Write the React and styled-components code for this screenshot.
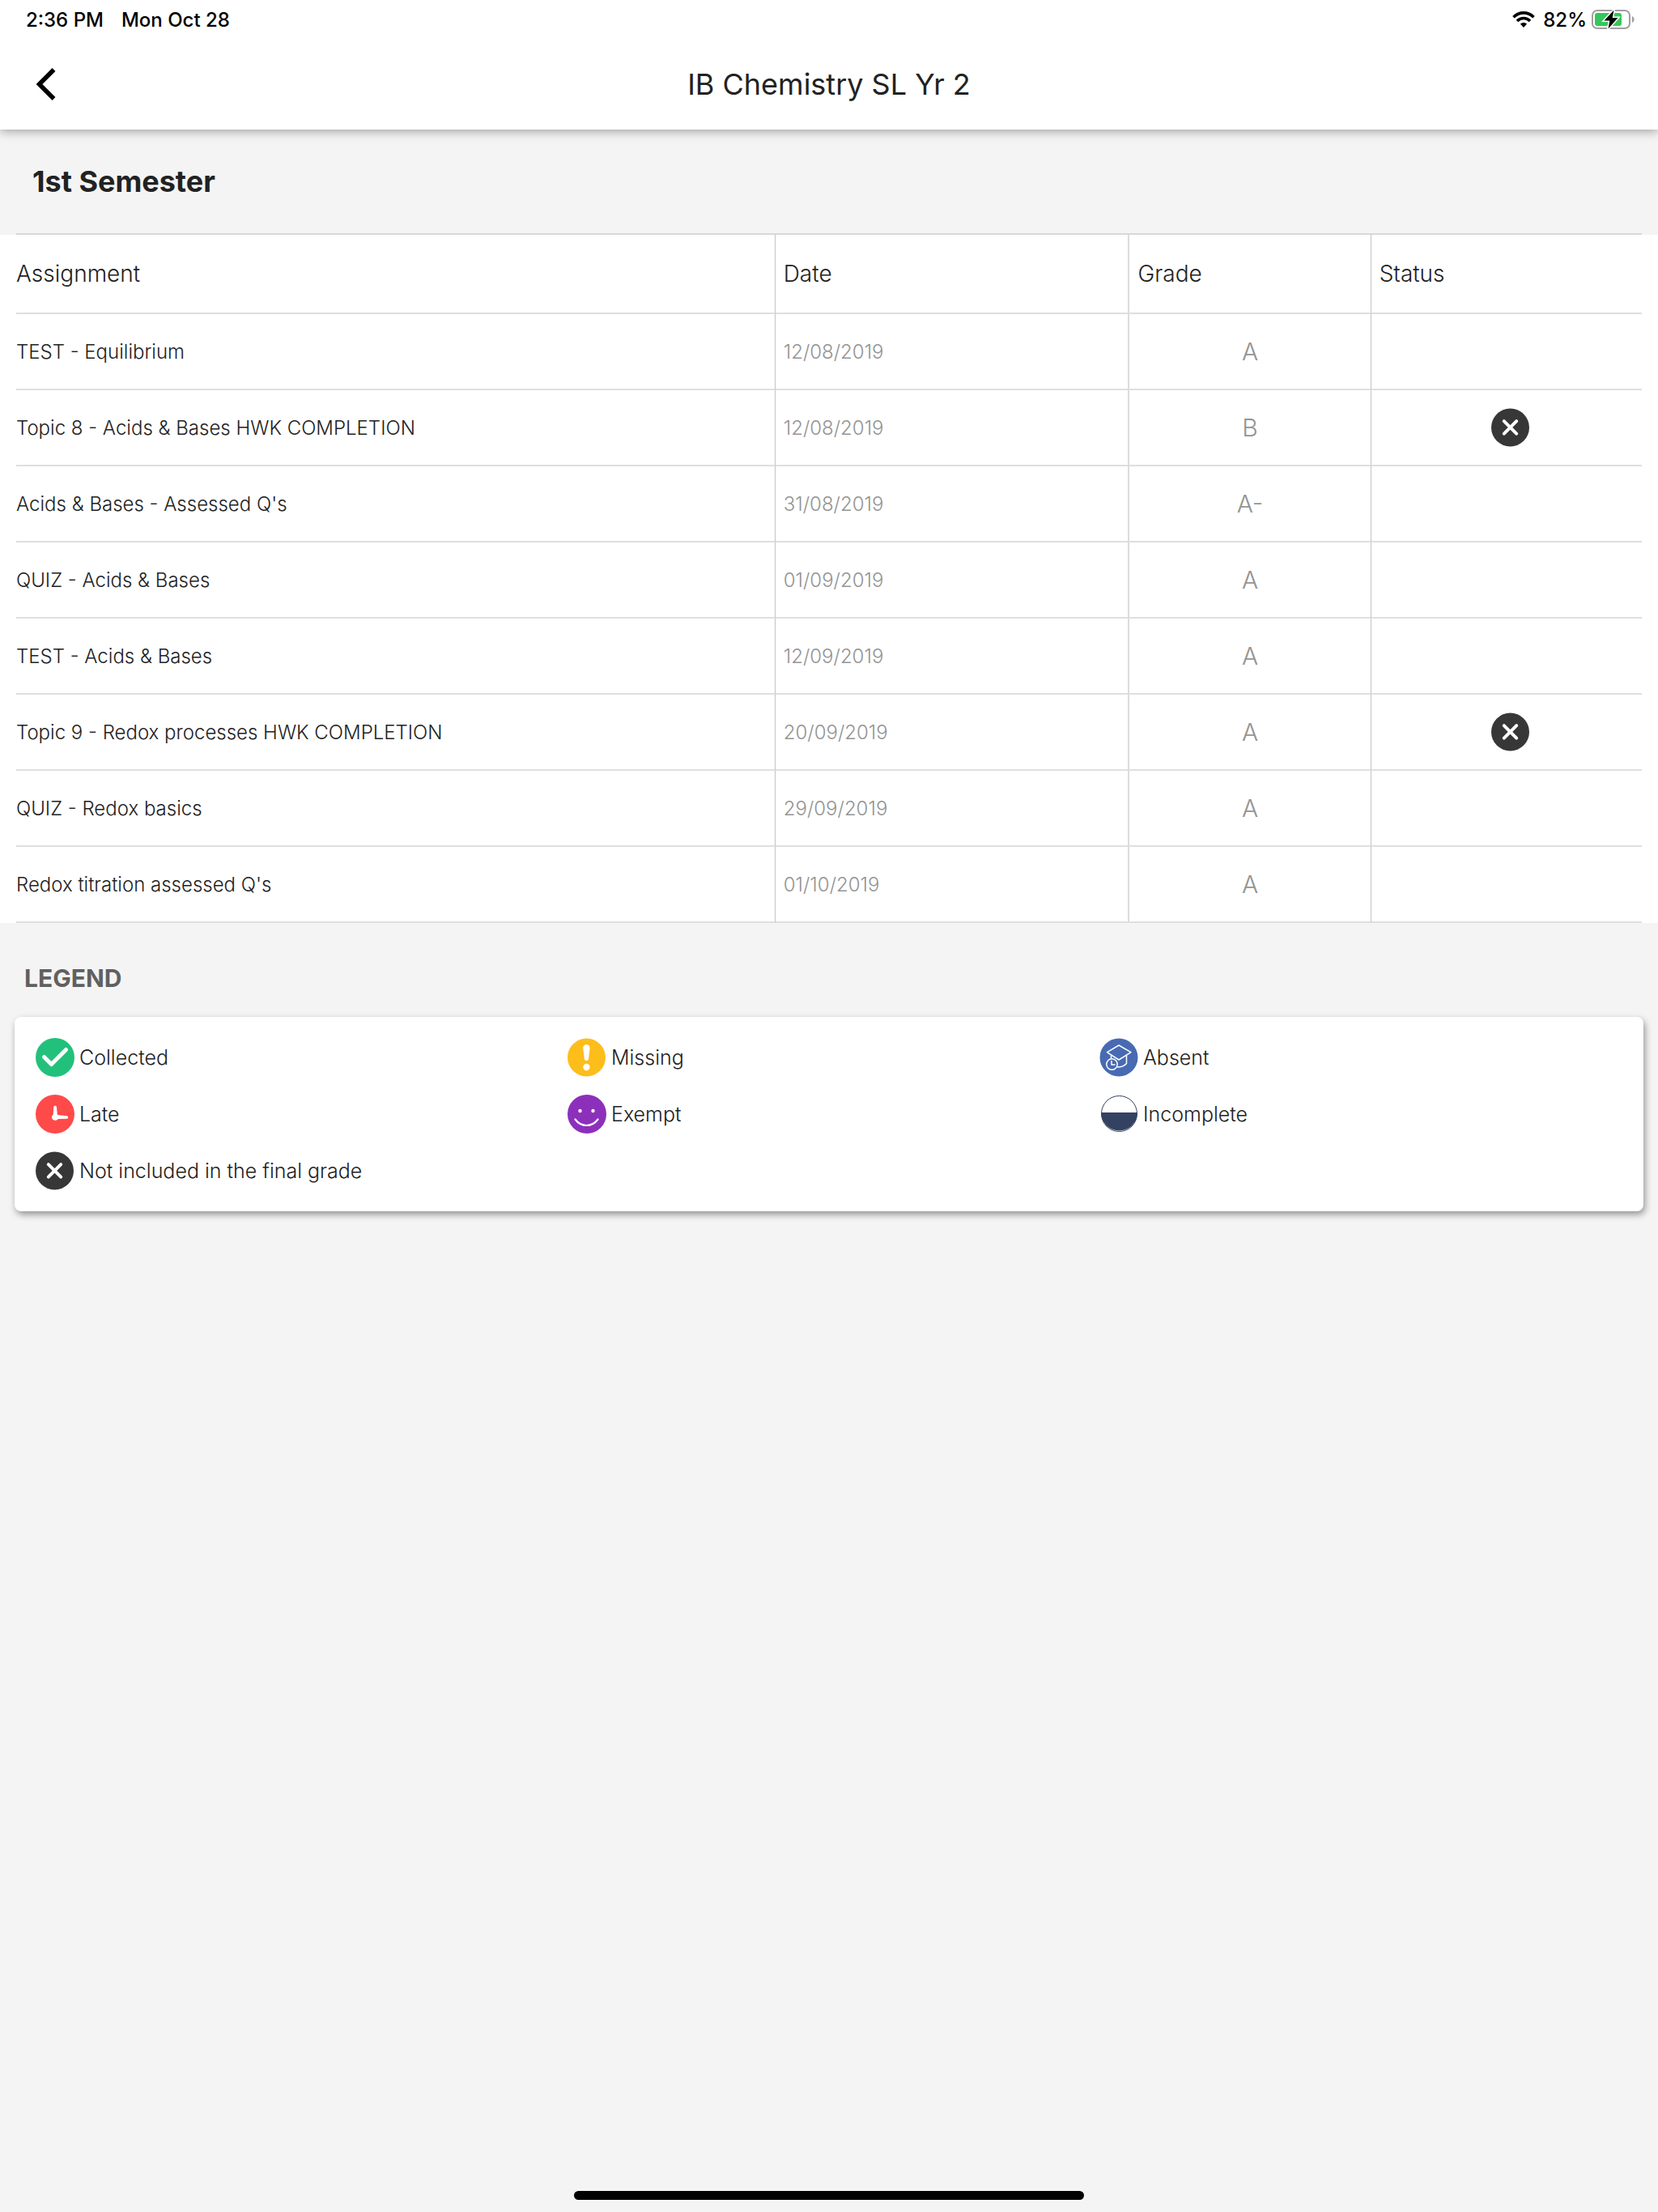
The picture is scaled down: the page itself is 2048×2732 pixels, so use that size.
import React from "react";
import styled, { createGlobalStyle } from "styled-components";

const assignments = [
  { name: "TEST - Equilibrium", date: "12/08/2019", grade: "A" },
  {
    name: "Topic 8 - Acids & Bases HWK COMPLETION",
    date: "12/08/2019",
    grade: "B",
    excluded: true,
  },
  { name: "Acids & Bases - Assessed Q's", date: "31/08/2019", grade: "A-" },
  { name: "QUIZ - Acids & Bases", date: "01/09/2019", grade: "A" },
  { name: "TEST - Acids & Bases", date: "12/09/2019", grade: "A" },
  {
    name: "Topic 9 - Redox processes HWK COMPLETION",
    date: "20/09/2019",
    grade: "A",
    excluded: true,
  },
  { name: "QUIZ - Redox basics", date: "29/09/2019", grade: "A" },
  { name: "Redox titration assessed Q's", date: "01/10/2019", grade: "A" },
];

const CollectedIcon = () => (
  <StatusIcon viewBox="0 0 48 48" aria-hidden="true">
    <circle cx="24" cy="24" r="24" fill="#22c17b" />
    <path
      d="M10.5 23.5 L19.5 32.5 L37.5 14.5"
      fill="none"
      stroke="#fff"
      strokeWidth="5"
      strokeLinecap="round"
      strokeLinejoin="round"
    />
  </StatusIcon>
);

const MissingIcon = () => (
  <StatusIcon viewBox="0 0 48 48" aria-hidden="true">
    <circle cx="23.5" cy="24" r="23.5" fill="#fdbd1b" />
    <path
      d="M19.2 12.5 C19 6.5 27.8 6.5 27.6 12.5 L26 26 C25.7 28.6 21.1 28.6 20.8 26 Z"
      fill="#fff"
    />
    <circle cx="23.4" cy="36" r="4.2" fill="#fff" />
  </StatusIcon>
);

const AbsentIcon = () => (
  <StatusIcon viewBox="0 0 48 48" aria-hidden="true">
    <circle cx="24" cy="24" r="23.5" fill="#486ab3" />
    <g fill="none" stroke="#fff" strokeWidth="1.5" strokeLinejoin="round">
      <path d="M9.500 17.7 L24 9 L39 17.7 L24 27 Z" />
      <path d="M14.5 21 V26" />
      <path d="M33.5 21.5 V31.5 C31 34.5 27 36 22 36" />
      <circle cx="15.5" cy="32.5" r="6.7" />
      <path d="M15 28 V33 H19.5" />
    </g>
  </StatusIcon>
);

const LateIcon = () => (
  <StatusIcon viewBox="0 0 48 48" aria-hidden="true">
    <circle cx="24" cy="24" r="24" fill="#ff4a4a" />
    <path
      d="M22.2 15.5 C22.2 13.2 26 13.2 26 15.5 L26.8 25 L38.5 26.2 C40.8 26.5 40.8 29.5 38.5 29.7 L27.8 30 C26 33 20 32.3 20 28 C20 26.5 20.8 25.5 21.7 24.8 Z"
      fill="#fff"
    />
  </StatusIcon>
);

const ExemptIcon = () => (
  <StatusIcon viewBox="0 0 48 48" aria-hidden="true">
    <circle cx="24" cy="24" r="24" fill="#8c30bb" />
    <circle cx="15.5" cy="20" r="2.2" fill="#fff" />
    <circle cx="31.5" cy="20" r="2.2" fill="#fff" />
    <path
      d="M9.5 30.5 C17 40.5 30 40.5 37.5 30.5"
      fill="none"
      stroke="#fff"
      strokeWidth="2.2"
      strokeLinecap="round"
    />
  </StatusIcon>
);

const IncompleteIcon = () => (
  <StatusIcon viewBox="0 0 48 48" aria-hidden="true">
    <circle cx="24.5" cy="23.5" r="22" fill="#fff" stroke="#344262" />
    <path d="M2 22 H47 A22.5 22.5 0 1 1 2 22 Z" fill="#344262" />
  </StatusIcon>
);

const ExcludedIcon = ({ label }) => (
  <StatusIcon
    viewBox="0 0 48 48"
    role={label ? "img" : undefined}
    aria-label={label}
    aria-hidden={label ? undefined : "true"}
  >
    <circle cx="23.5" cy="24" r="23.5" fill="#373737" />
    <path
      d="M15.8 16.2 L31.2 31.6 M31.2 16.2 L15.8 31.6"
      stroke="#fff"
      strokeWidth="4"
      strokeLinecap="round"
    />
  </StatusIcon>
);

const legend = [
  { label: "Collected", Icon: CollectedIcon },
  { label: "Missing", Icon: MissingIcon },
  { label: "Absent", Icon: AbsentIcon },
  { label: "Late", Icon: LateIcon },
  { label: "Exempt", Icon: ExemptIcon },
  { label: "Incomplete", Icon: IncompleteIcon },
  { label: "Not included in the final grade", Icon: ExcludedIcon },
];

const WifiIcon = () => (
  <svg width="28" height="20" viewBox="0 0 28 20" aria-hidden="true">
    <g fill="none" stroke="#000" strokeWidth="3.6">
      <path d="M1.5 7.3 C8.5 0.1 19.5 0.1 26.5 7.3" />
      <path d="M6 12 C10.5 7.3 17.5 7.3 22 12" />
    </g>
    <path d="M14 20 L9.9 15.6 C12.2 13.4 15.8 13.4 18.1 15.6 Z" />
  </svg>
);

const BatteryIcon = () => (
  <svg width="54" height="26" viewBox="0 0 54 26" aria-hidden="true">
    <rect
      x="1"
      y="2"
      width="46"
      height="22"
      rx="6"
      fill="#fff"
      stroke="#a0a0a0"
      strokeWidth="2"
    />
    <path d="M50 9 C53.5 10.5 53.5 15.5 50 17 Z" fill="#a0a0a0" />
    <rect x="4" y="5" width="33" height="16" rx="3" fill="#35c759" />
    <path
      d="M27.5 1.5 L15.5 14.5 H22.3 L20.5 24.5 L32.5 11 H25.7 Z"
      stroke="#fff"
      strokeWidth="3"
      paintOrder="stroke"
    />
  </svg>
);

const App = () => {
  return (
    <Page>
      <GlobalStyle />
      <Header>
        <StatusBar>
          <StatusGroup $gap="22px">
            <span>2:36 PM</span>
            <span>Mon Oct 28</span>
          </StatusGroup>
          <StatusGroup $gap="6px">
            <WifiIcon />
            <Percent>82%</Percent>
            <BatteryIcon />
          </StatusGroup>
        </StatusBar>
        <NavBar>
          <BackButton aria-label="Back">
            <svg width="26" height="40" viewBox="0 0 26 40" aria-hidden="true">
              <path
                d="M22.5 2 L4.5 20 L22.5 38"
                fill="none"
                stroke="#000"
                strokeWidth="5.5"
              />
            </svg>
          </BackButton>
          <Title>IB Chemistry SL Yr 2</Title>
        </NavBar>
      </Header>
      <main>
        <Semester>1st Semester</Semester>
        <TableHolder>
          <Table>
            <thead>
              <tr>
                <HeadCell $width="46.7%">Assignment</HeadCell>
                <HeadCell $width="21.8%">Date</HeadCell>
                <HeadCell $width="14.85%">Grade</HeadCell>
                <HeadCell>Status</HeadCell>
              </tr>
            </thead>
            <tbody>
              {assignments.map((item) => (
                <tr key={item.name}>
                  <Cell>{item.name}</Cell>
                  <DateCell>{item.date}</DateCell>
                  <GradeCell>{item.grade}</GradeCell>
                  <StatusCell>
                    {item.excluded && (
                      <ExcludedIcon label="Not included in the final grade" />
                    )}
                  </StatusCell>
                </tr>
              ))}
            </tbody>
          </Table>
        </TableHolder>
        <LegendTitle>LEGEND</LegendTitle>
        <LegendCard>
          {legend.map(({ label, Icon }) => (
            <LegendItem key={label}>
              <Icon />
              {label}
            </LegendItem>
          ))}
        </LegendCard>
      </main>
      <HomeIndicator />
    </Page>
  );
};

const GlobalStyle = createGlobalStyle`
  * {
    box-sizing: border-box;
  }
  body {
    margin: 0;
    background: #f4f4f4;
    color: #222222;
    font-family: "Inter", "Liberation Sans", sans-serif;
  }
`;

const Page = styled.div`
  min-height: 100vh;
  display: flex;
  flex-direction: column;
`;

const Header = styled.header`
  background: #ffffff;
  box-shadow: 0 2px 12px rgba(0, 0, 0, 0.36);
`;

const StatusBar = styled.div`
  display: flex;
  justify-content: space-between;
  align-items: center;
  height: 48px;
  padding: 0 28px 0 32px;
  color: #000000;
  font-size: 24px;
  font-weight: 500;
`;

const StatusGroup = styled.div`
  display: flex;
  align-items: center;
  gap: ${({ $gap }) => $gap};
`;

const Percent = styled.span`
  padding-left: 4px;
`;

const NavBar = styled.div`
  display: grid;
  grid-template-columns: 112px 1fr 112px;
  align-items: center;
  height: 112px;
`;

const BackButton = styled.button`
  display: flex;
  align-items: center;
  height: 112px;
  padding: 0 0 0 44px;
  border: none;
  background: none;
  cursor: pointer;
`;

const Title = styled.h1`
  margin: 0;
  font-size: 36px;
  font-weight: 400;
  text-align: center;
`;

const Semester = styled.h2`
  margin: 0;
  padding: 0 40px;
  font-size: 36px;
  font-weight: 700;
  line-height: 128px;
`;

const TableHolder = styled.div`
  padding: 0 20px;
  background: linear-gradient(#f4f4f4 2px, #ffffff 2px);
`;

const Table = styled.table`
  width: 100%;
  border-collapse: separate;
  border-spacing: 0;
  border-top: 2px solid #d8d8d8;
  table-layout: fixed;
`;

const Cell = styled.td`
  height: 94px;
  padding: 0 10px;
  border-bottom: 2px solid #dfdfdf;
  border-right: 1px solid #c4c4c4;
  font-size: 24px;
  font-weight: 300;
  text-align: left;
  &:first-child {
    padding-left: 0;
  }
  &:nth-child(2) {
    border-right: 2px solid #dcdcdc;
  }
  &:last-child {
    border-right: none;
  }
`;

const HeadCell = styled(Cell).attrs({ as: "th", scope: "col" })`
  width: ${({ $width }) => $width || "auto"};
  height: 98px;
  font-size: 28px;
`;

const DateCell = styled(Cell)`
  color: #949494;
`;

const GradeCell = styled(Cell)`
  color: #949494;
  font-size: 30px;
  text-align: center;
`;

const StatusCell = styled(Cell)`
  padding-right: 0;
  text-align: center;
`;

const StatusIcon = styled.svg`
  flex: none;
  width: 48px;
  height: 48px;
  vertical-align: middle;
`;

const LegendTitle = styled.h3`
  margin: 0;
  padding: 50px 30px 30px;
  color: #606060;
  font-size: 30px;
  font-weight: 700;
  line-height: 36px;
`;

const LegendCard = styled.ul`
  display: grid;
  grid-template-columns: repeat(3, 1fr);
  margin: 0 18px;
  padding: 15px 15px 15px 26px;
  border-radius: 8px;
  background: #ffffff;
  box-shadow: 2px 4px 8px rgba(0, 0, 0, 0.4);
  list-style: none;
`;

const LegendItem = styled.li`
  display: flex;
  align-items: center;
  gap: 6px;
  height: 70px;
  font-size: 25px;
  font-weight: 300;
`;

const HomeIndicator = styled.div`
  width: 30.8%;
  height: 11px;
  margin: auto auto 15px;
  border-radius: 6px;
  background: #000000;
`;

export default App;
